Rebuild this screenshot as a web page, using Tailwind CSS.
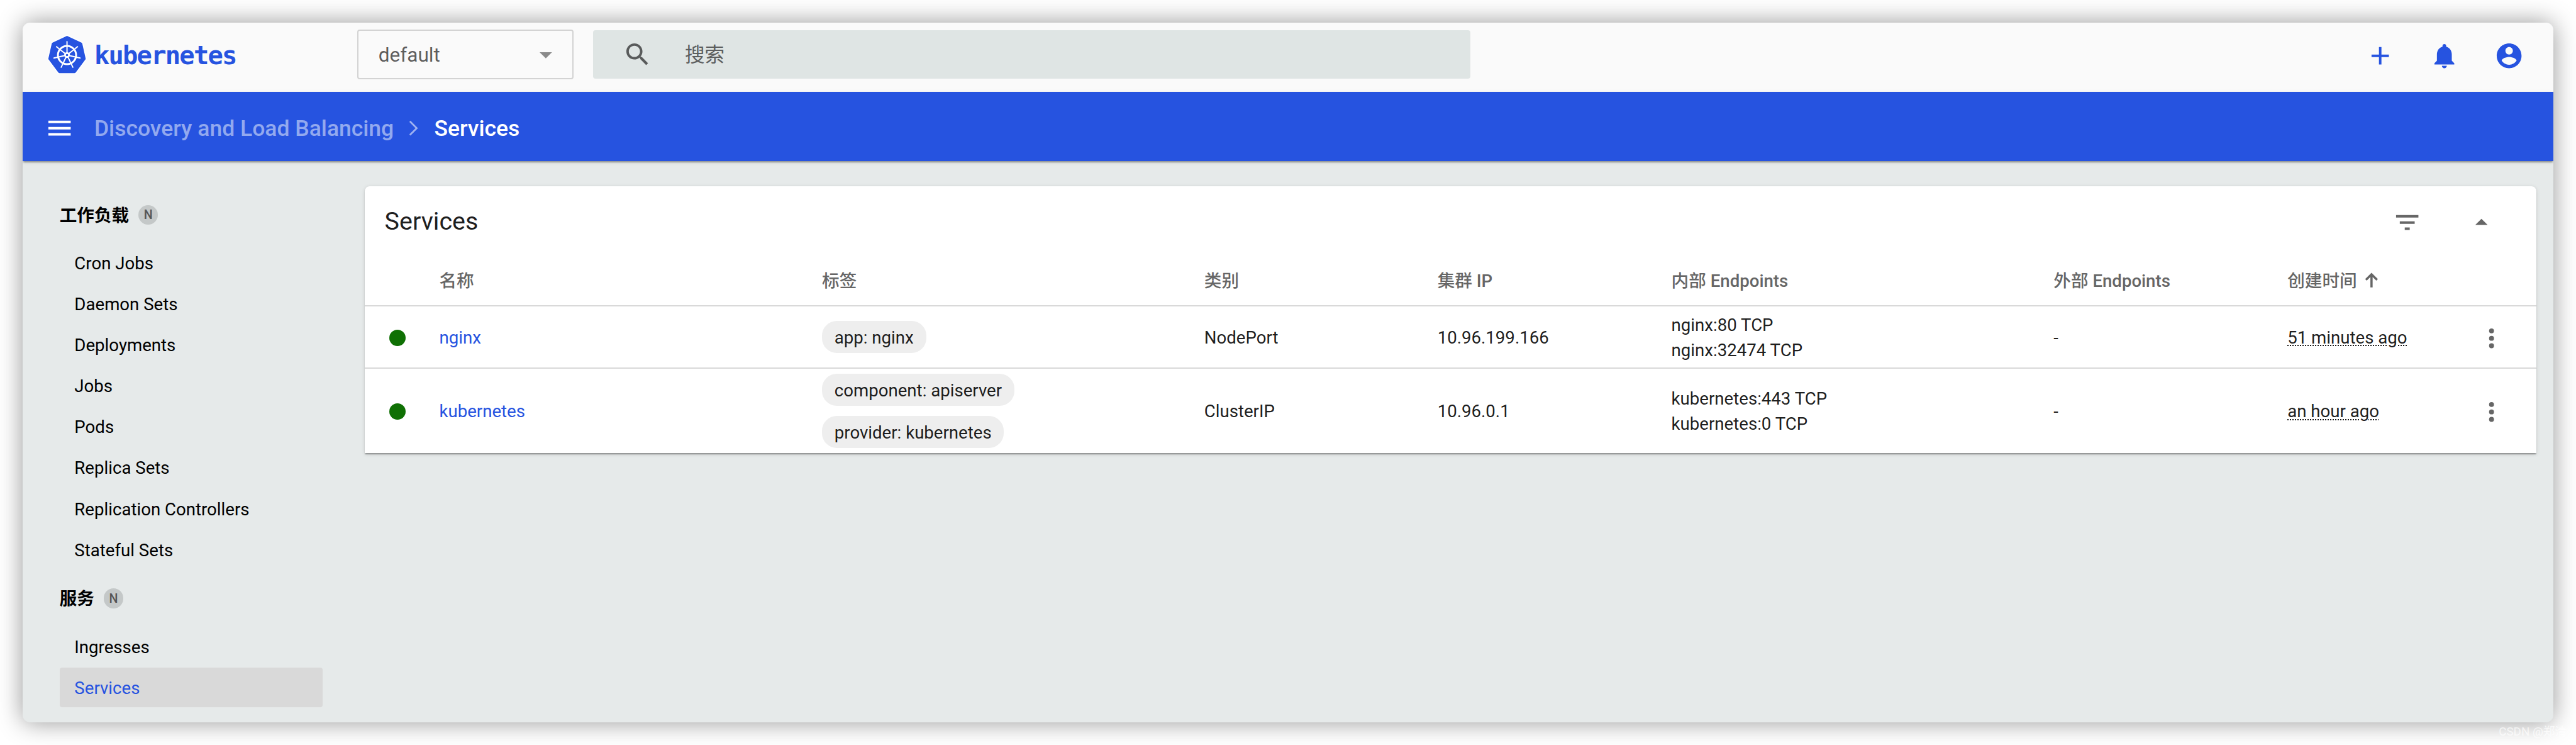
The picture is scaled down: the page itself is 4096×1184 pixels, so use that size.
<!DOCTYPE html>
<html lang="zh-CN">
<head>
<meta charset="utf-8">
<title>Kubernetes Dashboard</title>
<script src="https://cdn.jsdelivr.net/npm/@tailwindcss/browser@4"></script>
</head>
<body class="overflow-hidden bg-white">
<div class="relative flex h-[1200px] w-[4152px] p-[36px] [zoom:0.98651] font-['Roboto','Noto_Sans_CJK_SC',sans-serif] text-[28px] leading-[41px] text-black/90">
  <div class="flex flex-1 flex-col overflow-hidden rounded-[12px] bg-[#e6eaea] shadow-[0_0_40px_rgba(0,0,0,0.42)]">

    <!-- top bar -->
    <header class="flex h-[112px] shrink-0 items-start bg-[#fafafa] pr-[48px] pl-[40px]">
      <div class="flex w-[500px] items-start pt-[20px]">
        <svg class="h-[64px] w-[64px]" viewBox="48 48 192 192">
          <path d="M144 54L214 87Q217 89 218 92L234 163Q235 167 232 170L186 231Q183 234 180 234H108Q105 234 102 231L56 170Q53 167 54 163L70 92Q71 89 74 87Z" fill="#2653e0" stroke="#fff" stroke-width="10" stroke-linejoin="round" paint-order="stroke"/>
          <g stroke="#fff" fill="none" stroke-linecap="round">
            <circle cx="144" cy="147" r="44" stroke-width="9"/>
            <g stroke-width="6">
              <path d="M144 147V82"/>
              <path d="M144 147V82" transform="rotate(51.43 144 147)"/>
              <path d="M144 147V82" transform="rotate(102.86 144 147)"/>
              <path d="M144 147V82" transform="rotate(154.29 144 147)"/>
              <path d="M144 147V82" transform="rotate(205.71 144 147)"/>
              <path d="M144 147V82" transform="rotate(257.14 144 147)"/>
              <path d="M144 147V82" transform="rotate(308.57 144 147)"/>
            </g>
          </g>
          <circle cx="144" cy="147" r="14" fill="#fff"/>
          <circle cx="144" cy="147" r="5.5" fill="#2653e0"/>
        </svg>
        <span class="ml-[12px] mt-[10px] font-['DejaVu_Sans_Mono'] text-[41px] leading-[48px] font-bold tracking-[-1.8px] text-[#2653e0]">kubernetes</span>
      </div>
      <div class="mt-[12px] flex h-[80px] w-[348px] items-center justify-between rounded-[4px] border-[2.1px] border-[#d3d3d3] pr-[32px] pl-[32px] text-[32px] text-black/65">
        <span class="mt-[2px]">default</span>
        <svg class="mt-[2px] h-[10px] w-[20px]" viewBox="0 0 10 5"><path d="M0 0h10L5 5z" fill="#8a8a8a"/></svg>
      </div>
      <div class="mt-[13px] ml-[32px] flex h-[78px] w-[1414px] items-center rounded-[4px] bg-[#dfe5e4] pl-[48px] text-[32px] text-[#5c5e5e]">
        <svg class="h-[48px] w-[48px]" viewBox="0 0 24 24" fill="#595b5b"><path d="M15.5 14h-.79l-.28-.27C15.41 12.59 16 11.11 16 9.5 16 5.91 13.09 3 9.5 3S3 5.91 3 9.5 5.91 16 9.5 16c1.61 0 3.09-.59 4.23-1.57l.27.28v.79l5 4.99L20.49 19l-4.99-5zm-6 0C7.01 14 5 11.99 5 9.5S7.01 5 9.5 5 14 7.01 14 9.5 11.99 14 9.5 14z"/></svg>
        <span class="mt-[3px] ml-[52px]">搜索</span>
      </div>
      <div class="mt-[30px] ml-auto flex gap-[56px] text-[#2653e0]">
        <svg class="h-[48px] w-[48px]" viewBox="0 0 24 24" fill="currentColor"><path d="M19 13h-6v6h-2v-6H5v-2h6V5h2v6h6v2z"/></svg>
        <svg class="h-[48px] w-[48px]" viewBox="0 0 24 24" fill="currentColor"><path d="M12 22c1.1 0 2-.9 2-2h-4c0 1.1.89 2 2 2zm6-6v-5c0-3.07-1.64-5.64-4.5-6.32V4c0-.83-.67-1.5-1.5-1.5s-1.5.67-1.5 1.5v.68C7.63 5.36 6 7.92 6 11v5l-2 2v1h16v-1l-2-2z"/></svg>
        <svg class="h-[48px] w-[48px]" viewBox="0 0 24 24" fill="currentColor"><path d="M12 2C6.48 2 2 6.48 2 12s4.48 10 10 10 10-4.48 10-10S17.52 2 12 2zm0 3c1.66 0 3 1.34 3 3s-1.34 3-3 3-3-1.34-3-3 1.34-3 3-3zm0 14.2c-2.5 0-4.71-1.28-6-3.22.03-1.99 4-3.08 6-3.08 1.99 0 5.97 1.09 6 3.08-1.29 1.94-3.5 3.22-6 3.22z"/></svg>
      </div>
    </header>

    <!-- breadcrumb bar -->
    <nav class="relative flex h-[112px] shrink-0 items-center bg-[#2653e0] pt-[4px] pl-[36px] text-[36px] font-medium text-white shadow-[0_4px_2px_-2px_rgba(0,0,0,0.2),0_2px_2px_rgba(0,0,0,0.14),0_2px_6px_rgba(0,0,0,0.12)]">
      <svg class="h-[48px] w-[48px]" viewBox="0 0 24 24" fill="#fff"><path d="M3 18h18v-2H3v2zm0-5h18v-2H3v2zm0-7v2h18V6H3z"/></svg>
      <span class="mt-[3px] ml-[32px] w-[484px] whitespace-nowrap text-white/50">Discovery and Load Balancing</span>
      <svg class="ml-[7px] h-[48px] w-[48px]" viewBox="0 0 24 24" fill="none" stroke="#fff" stroke-opacity=".55" stroke-width="1.4"><path d="M9 6.5l5.5 5.5L9 17.5"/></svg>
      <span class="mt-[3px] ml-[9px]">Services</span>
    </nav>

    <div class="flex min-h-0 flex-1 items-start pt-[40px]">
      <!-- sidebar -->
      <aside class="flex w-[552px] shrink-0 flex-col gap-[2px] pr-[68px] pl-[60px] text-black">
        <div class="-mb-[2px] flex h-[92px] items-center gap-[15px] font-bold"><span class="mt-[3px]">工作负载</span><span class="flex h-[32px] w-[32px] items-center justify-center rounded-full bg-[#c4c8c8] pt-[2px] text-[20px] leading-none font-medium text-[#555]">N</span></div>
        <a class="flex h-[64px] items-center pt-[2px] pl-[24px]">Cron Jobs</a>
        <a class="flex h-[64px] items-center pt-[2px] pl-[24px]">Daemon Sets</a>
        <a class="flex h-[64px] items-center pt-[2px] pl-[24px]">Deployments</a>
        <a class="flex h-[64px] items-center pt-[2px] pl-[24px]">Jobs</a>
        <a class="flex h-[64px] items-center pt-[2px] pl-[24px]">Pods</a>
        <a class="flex h-[64px] items-center pt-[2px] pl-[24px]">Replica Sets</a>
        <a class="flex h-[64px] items-center pt-[2px] pl-[24px]">Replication Controllers</a>
        <a class="flex h-[64px] items-center pt-[2px] pl-[24px]">Stateful Sets</a>
        <div class="-my-[2px] flex h-[92px] items-center gap-[15px] font-bold"><span class="mt-[3px]">服务</span><span class="flex h-[32px] w-[32px] items-center justify-center rounded-full bg-[#c4c8c8] pt-[2px] text-[20px] leading-none font-medium text-[#555]">N</span></div>
        <a class="flex h-[64px] items-center pt-[2px] pl-[24px]">Ingresses</a>
        <a class="flex h-[64px] items-center rounded-[4px] bg-[#d9d9d9] pt-[2px] pl-[24px] text-[#2653e0]">Services</a>
      </aside>

      <!-- services card -->
      <main class="flex w-[3500px] shrink-0 flex-col rounded-t-[8px] bg-white shadow-[0_4px_2px_-2px_rgba(0,0,0,0.2),0_2px_2px_rgba(0,0,0,0.14),0_2px_6px_rgba(0,0,0,0.12)]">
        <div class="flex h-[112px] items-center pt-[2px] pr-[64px] pl-[32px]">
          <h2 class="text-[40px]">Services</h2>
          <svg class="mt-[3px] ml-auto h-[48px] w-[48px]" viewBox="0 0 24 24" fill="#666"><path d="M10 18h4v-2h-4v2zM3 6v2h18V6H3zm3 7h12v-2H6v2z"/></svg>
          <svg class="mt-[3px] ml-[72px] h-[48px] w-[48px]" viewBox="0 0 24 24" fill="#666"><path d="M7 14l5-5 5 5z"/></svg>
        </div>

        <div class="grid h-[82px] grid-cols-[120px_617px_616px_376px_377px_616px_377px_305px_1fr] items-center border-b-[2.1px] border-[#d9d9d9] pt-[2px] font-medium text-[#666]">
          <span></span><span>名称</span><span>标签</span><span>类别</span><span>集群 IP</span><span>内部 Endpoints</span><span>外部 Endpoints</span>
          <span class="flex items-center">创建时间<svg class="-mt-[4px] ml-[13px] h-[24px] w-[22px]" viewBox="0 0 22 24" fill="none" stroke="#666" stroke-width="3.6"><path d="M11 24V3M2 12l9-9 9 9"/></svg></span>
          <span></span>
        </div>

        <div class="grid h-[100px] grid-cols-[120px_617px_616px_376px_377px_616px_377px_305px_1fr] items-center border-b-[2.1px] border-[#d9d9d9]">
          <span class="mt-[3px] ml-[39px] h-[27px] w-[27px] rounded-full bg-[#0f7004]"></span>
          <a class="mt-[3px] text-[#2653e0]">nginx</a>
          <div class="flex flex-col items-start gap-[16px]">
            <span class="flex h-[52px] items-center rounded-[24px] bg-[#eee] px-[20px] pt-[3px]">app: nginx</span>
          </div>
          <span class="mt-[3px]">NodePort</span>
          <span class="mt-[3px]">10.96.199.166</span>
          <div class="mt-[3px]">nginx:80 TCP<br>nginx:32474 TCP</div>
          <span class="mt-[3px]">-</span>
          <span class="mt-[3px] underline decoration-dotted decoration-[2px] underline-offset-[3px]">51 minutes ago</span>
          <svg class="mt-[4px] h-[48px] w-[48px]" viewBox="0 0 24 24" fill="#666"><circle cx="12" cy="6" r="2"/><circle cx="12" cy="12" r="2"/><circle cx="12" cy="18" r="2"/></svg>
        </div>

        <div class="grid h-[136px] grid-cols-[120px_617px_616px_376px_377px_616px_377px_305px_1fr] items-center">
          <span class="mt-[2px] ml-[39px] h-[27px] w-[27px] rounded-full bg-[#0f7004]"></span>
          <a class="mt-[3px] text-[#2653e0]">kubernetes</a>
          <div class="flex flex-col items-start gap-[16px]">
            <span class="flex h-[52px] items-center rounded-[24px] bg-[#eee] px-[20px] pt-[3px]">component: apiserver</span>
            <span class="flex h-[52px] items-center rounded-[24px] bg-[#eee] px-[20px] pt-[3px]">provider: kubernetes</span>
          </div>
          <span class="mt-[3px]">ClusterIP</span>
          <span class="mt-[3px]">10.96.0.1</span>
          <div class="mt-[2px]">kubernetes:443 TCP<br>kubernetes:0 TCP</div>
          <span class="mt-[3px]">-</span>
          <span class="mt-[3px] underline decoration-dotted decoration-[2px] underline-offset-[3px]">an hour ago</span>
          <svg class="mt-[4px] h-[48px] w-[48px]" viewBox="0 0 24 24" fill="#666"><circle cx="12" cy="6" r="2"/><circle cx="12" cy="12" r="2"/><circle cx="12" cy="18" r="2"/></svg>
        </div>
      </main>
    </div>
  </div>
  <span class="absolute right-[15px] bottom-[8px] text-[19px] leading-[24px] whitespace-nowrap text-white/70">CSDN @郑清</span>
</div>
</body>
</html>
